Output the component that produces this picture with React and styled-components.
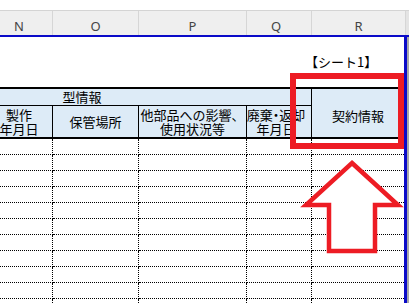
import React from 'react';
import styled, { createGlobalStyle } from 'styled-components';

const GlobalStyle = createGlobalStyle`
  html, body {
    margin: 0;
    padding: 0;
    background: #fff;
  }
  body {
    font-family: "Noto Sans CJK JP", "Noto Sans", sans-serif;
    overflow: hidden;
  }
`;

// M (mostly scrolled off) .. R
const COLS = '133px 67px 86px 108px 65px 92px';

const Window = styled.div`
  position: relative;
  width: 409px;
  height: 303px;
  overflow: hidden;
  background: #fff;
`;

const FormulaEdge = styled.div`
  height: 10px;
  border-bottom: 1px solid #d4d4d4;
`;

const ColumnHeaderBar = styled.div`
  display: grid;
  grid-template-columns: 133px 67px 86px 108px 65px 94px 1fr;
  margin-left: -147px;
  height: 24px;
  background: #efefef;
  border-bottom: 2px solid #0a0ac8;
`;

const ColumnLetter = styled.div`
  display: flex;
  align-items: flex-end;
  justify-content: center;
  padding-bottom: 2px;
  padding-right: ${(p) => p.$shift || 0}px;
  border-right: 1px solid #d6d6d6;
  font-family: "Noto Sans", sans-serif;
  font-size: 13px;
  line-height: 1;
  color: #444;
`;

const HeaderFiller = styled.div`
  background: #e4e4e4;
`;

const SheetBody = styled.div`
  display: flex;
  height: 266px;
`;

const SheetArea = styled.div`
  flex: 1;
  overflow: hidden;
`;

const BlueEdge = styled.div`
  width: 3px;
  background: #0a0ac8;
`;

const GrayEdge = styled.div`
  width: 2px;
  background: #a8a8a8;
`;

const Grid = styled.div`
  display: grid;
  grid-template-columns: ${COLS};
  margin-left: -147px;
`;

const TopRows = styled(Grid)`
  height: 50px;
  align-items: center;
`;

const SheetTitle = styled.div`
  grid-column: 6;
  margin-left: -7px;
  font-size: 13px;
  line-height: 16px;
  white-space: nowrap;
`;

const HeaderBand = styled(Grid)`
  background: #ddebf7;
  border-top: 2px solid #000;
  border-bottom: 2px solid #000;
  font-size: 13px;
  color: #000;
`;

const GroupCell = styled.div`
  grid-column: 1 / 6;
  grid-row: 1;
  box-sizing: border-box;
  height: 17px;
  border-right: 1px solid #000;
  border-bottom: 1px solid #000;
  text-align: center;
  line-height: 16px;
`;

const HeadCell = styled.div`
  grid-row: 2;
  box-sizing: border-box;
  height: 31px;
  display: flex;
  align-items: center;
  justify-content: center;
  padding-right: ${(p) => p.$shift || 0}px;
  border-right: 1px solid #000;
  text-align: center;
  line-height: 14px;
  white-space: nowrap;
  font-feature-settings: ${(p) => (p.$tight ? '"palt"' : 'normal')};
`;

const ContractCell = styled.div`
  grid-column: 6;
  grid-row: 1 / 3;
  display: flex;
  align-items: center;
  justify-content: center;
  padding-top: 4px;
`;

const DataCell = styled.div`
  box-sizing: border-box;
  height: 16px;
  border-bottom: 1px dotted #000;
  border-right: ${(p) => (p.$last ? 'none' : '1px dotted #000')};
`;

const Callout = styled.div`
  position: absolute;
  left: 290px;
  top: 73px;
  width: 114px;
  height: 76px;
  box-sizing: border-box;
  border: 6px solid #ed1c24;
`;

const ArrowLayer = styled.svg`
  position: absolute;
  left: 0;
  top: 0;
  pointer-events: none;
`;

// column M is scrolled out of view, so its letter is left blank
const columns = [
  { key: 'M', label: '' },
  { key: 'N', label: 'N' },
  { key: 'O', label: 'O' },
  { key: 'P', label: 'P' },
  { key: 'Q', label: 'Q', shift: 6 },
  { key: 'R', label: 'R' },
];
const rows = Array.from({ length: 11 }, (_, i) => i);

function App() {
  return (
    <Window>
      <GlobalStyle />
      <FormulaEdge />
      <ColumnHeaderBar>
        {columns.map((c) => (
          <ColumnLetter key={c.key} $shift={c.shift}>
            {c.label}
          </ColumnLetter>
        ))}
        <HeaderFiller />
      </ColumnHeaderBar>

      <SheetBody>
        <SheetArea>
          <TopRows>
            <SheetTitle>【シート1】</SheetTitle>
          </TopRows>

          <HeaderBand>
            <GroupCell>型情報</GroupCell>
            <HeadCell />
            <HeadCell>
              製作
              <br />
              年月日
            </HeadCell>
            <HeadCell>保管場所</HeadCell>
            <HeadCell>
              他部品への影響、
              <br />
              使用状況等
            </HeadCell>
            <HeadCell $tight $shift={6}>
              廃棄・返却
              <br />
              年月日
            </HeadCell>
            <ContractCell>契約情報</ContractCell>
          </HeaderBand>

          <Grid>
            {rows.map((r) =>
              columns.map((c, i) => (
                <DataCell key={`${r}-${c.key}`} $last={i === columns.length - 1} />
              ))
            )}
          </Grid>
        </SheetArea>
        <BlueEdge />
        <GrayEdge />
      </SheetBody>

      <Callout />
      <ArrowLayer width="409" height="303" viewBox="0 0 409 303">
        <polygon
          points="352,163 398,205 375,205 375,251 329,251 329,205 306,205"
          fill="#fff"
          stroke="#ed1c24"
          strokeWidth="4.5"
          strokeLinejoin="miter"
        />
      </ArrowLayer>
    </Window>
  );
}

export default App;
